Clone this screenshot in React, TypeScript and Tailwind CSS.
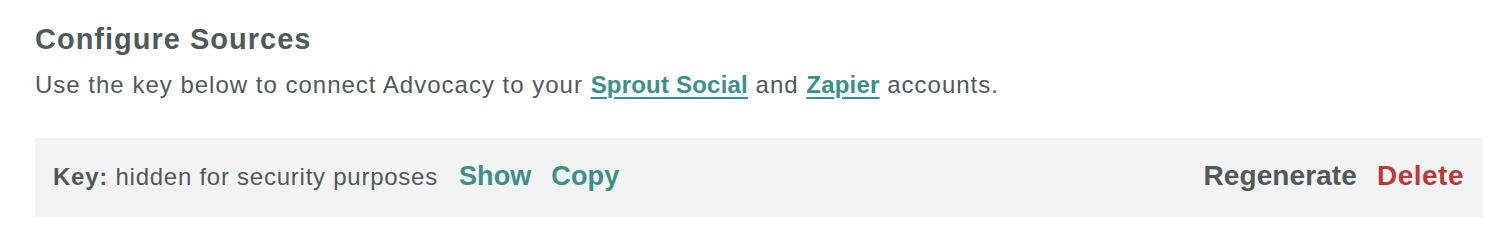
import React from "react";

export default function App() {
  return (
    <div className="w-[1508px] h-[230px] bg-white text-[#4f5a5a]" style={{ fontFamily: '"Liberation Sans", Arial, sans-serif' }}>
      <div className="pl-[35px] pr-[25px] pt-[23px]">
        <h2 className="text-[29px] leading-[32px] font-bold tracking-[1px]">Configure Sources</h2>
        <p className="mt-[16px] text-[24px] leading-[28px] tracking-[1px]">
          Use the key below to connect Advocacy to your{" "}
          <a href="#" className="font-bold tracking-[0.2px] text-[#3b9189] underline underline-offset-[4px] decoration-2">Sprout Social</a>{" "}
          and{" "}
          <a href="#" className="font-bold tracking-[0.2px] text-[#3b9189] underline underline-offset-[4px] decoration-2">Zapier</a>{" "}
          accounts.
        </p>
        <div className="mt-[39px] h-[79px] bg-[#f2f4f3] flex items-center justify-between pl-[18px] pr-[19px] pb-[3px]">
          <div className="flex items-baseline">
            <span className="text-[24px] leading-[32px] tracking-[0.75px]"><span className="font-bold">Key:</span> hidden for security purposes</span>
            <button className="ml-[21px] text-[27px] leading-[32px] font-bold tracking-[0.1px] text-[#3b9189]">Show</button>
            <button className="ml-[20px] text-[27px] leading-[32px] font-bold tracking-[0.1px] text-[#3b9189]">Copy</button>
          </div>
          <div className="flex items-baseline">
            <button className="text-[28px] leading-[32px] font-bold tracking-[0.1px] text-[#4f5a5a]">Regenerate</button>
            <button className="ml-[20px] text-[28px] leading-[32px] font-bold tracking-[0.5px] text-[#b83a3a]">Delete</button>
          </div>
        </div>
      </div>
    </div>
  );
}
